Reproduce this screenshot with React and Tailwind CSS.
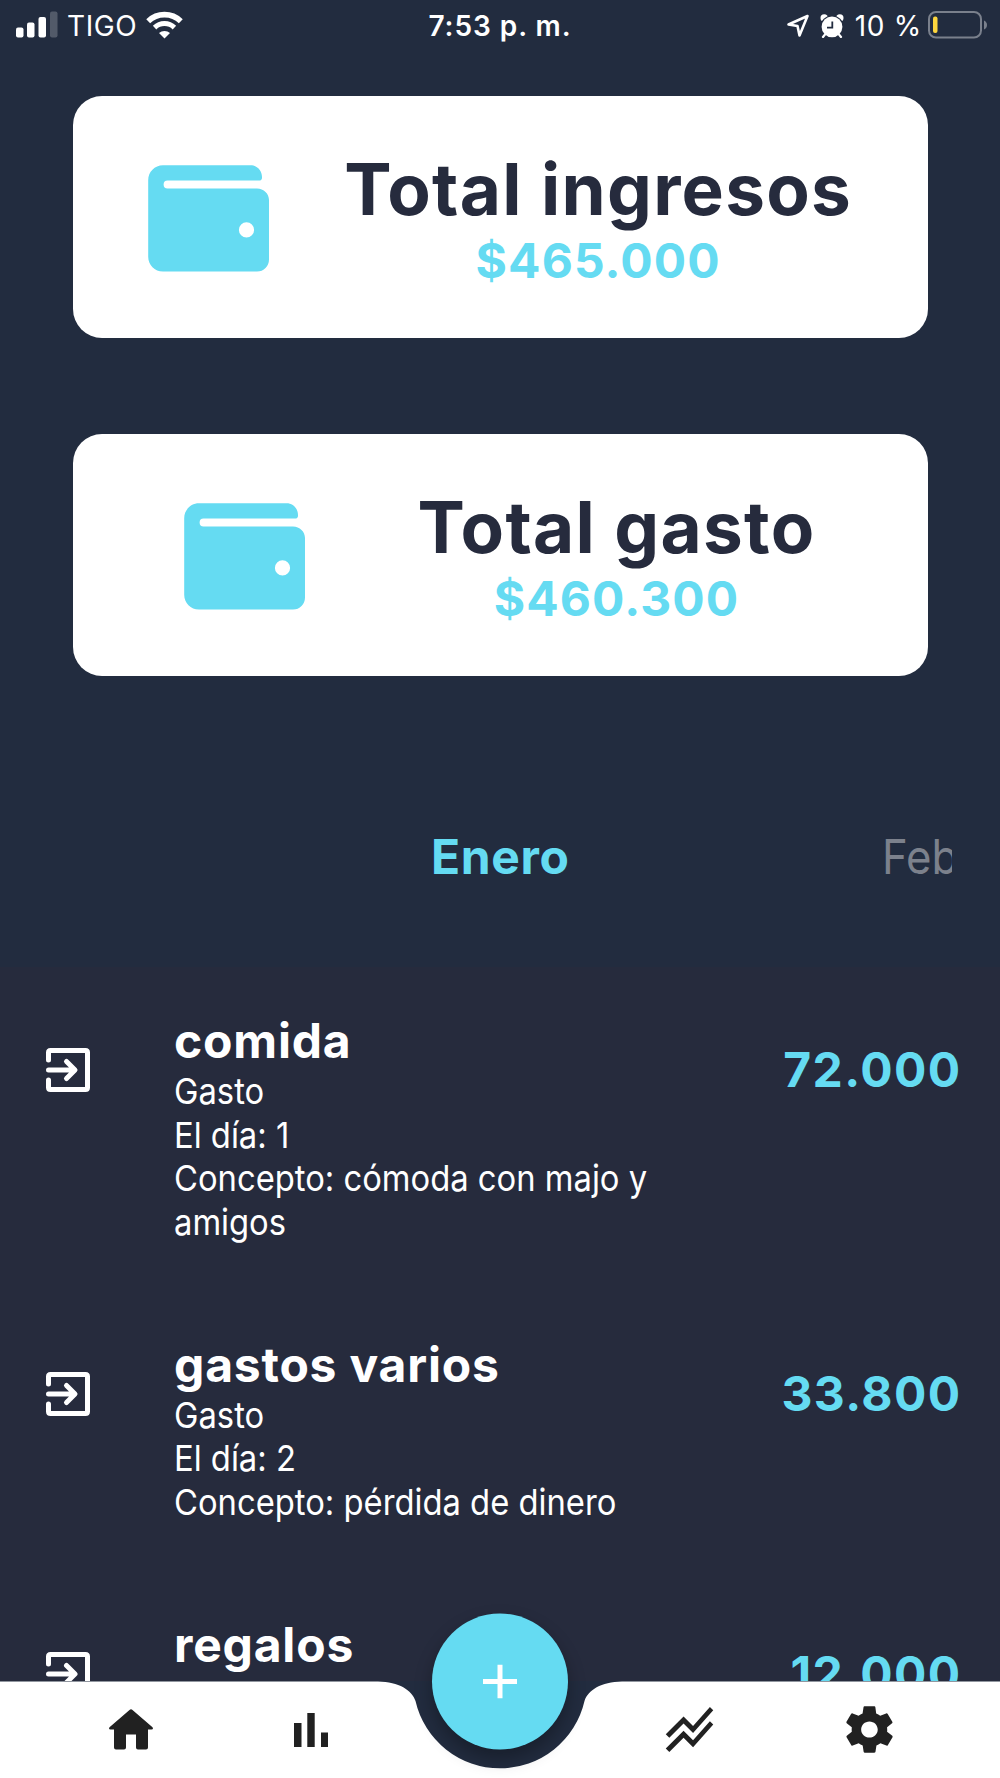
import React from 'react';
import { MdStackedLineChart } from 'react-icons/md';
import { IoMdSettings } from 'react-icons/io';

const totals = [
  { id: 'ingresos', title: 'Total ingresos', amount: '$465.000' },
  { id: 'gasto', title: 'Total gasto', amount: '$460.300' }
];

const movements = [
  {
    id: 1,
    name: 'comida',
    details: ['Gasto', 'El día: 1', 'Concepto: cómoda con majo y amigos'],
    amount: '72.000'
  },
  {
    id: 2,
    name: 'gastos varios',
    details: ['Gasto', 'El día: 2', 'Concepto: pérdida de dinero'],
    amount: '33.800'
  },
  { id: 3, name: 'regalos', details: [], amount: '12.000' }
];

function StatusBar() {
  return (
    <div className="grid h-[51px] grid-cols-[1fr_auto_1fr] items-center pt-px text-[28px] leading-[51px]">
      <div className="flex items-center pl-4">
        {/* señal */}
        <svg width="42" height="27" viewBox="0 0 42 27" fill="#fff" className="mt-[-4px]">
          <rect x="0" y="16.5" width="7.5" height="10" rx="2" />
          <rect x="11" y="11.5" width="7.5" height="15" rx="2" />
          <rect x="22.5" y="6" width="7.5" height="20.5" rx="2" />
          <rect x="34" y="0.5" width="7.5" height="26" rx="2" opacity="0.22" />
        </svg>
        <span className="ml-[9px] font-[370] tracking-[0.6px]">TIGO</span>
        {/* wifi */}
        <svg width="37" height="28" viewBox="0 0 37 28" fill="none" stroke="#fff" className="ml-[9px] mt-[-4px]">
          <path d="M2.2 10.2A23.5 23.5 0 0 1 34.8 10.2" strokeWidth="5.6" />
          <path d="M8.6 16.6A14.3 14.3 0 0 1 28.4 16.6" strokeWidth="5" />
          <path d="M18.5 27.5L13 22a8.2 8.2 0 0 1 11 0Z" fill="#fff" stroke="none" />
        </svg>
      </div>
      <div className="font-[580] tracking-[0.95px]">7:53 p. m.</div>
      <div className="flex items-center justify-end pr-[12px]">
        {/* ubicación */}
        <svg width="24" height="24" viewBox="0 0 24 24" fill="none" stroke="#fff" strokeWidth="2.6" strokeLinejoin="round" className="mt-[-2px]">
          <path d="M21.5 2L2.5 10.5L11.5 12L13.5 21.5Z" />
        </svg>
        {/* alarma */}
        <svg width="24" height="24" viewBox="0 0 24 24" className="ml-[10px] mt-[-2px]">
          <circle cx="4.2" cy="4" r="3.7" fill="#fff" />
          <circle cx="19.8" cy="4" r="3.7" fill="#fff" />
          <circle cx="12" cy="13" r="11.6" fill="#222c3f" />
          <circle cx="12" cy="12.8" r="10.4" fill="#fff" />
          <path d="M5 20.5L3 23M19 20.5L21 23" stroke="#fff" strokeWidth="2.2" strokeLinecap="round" />
          <path d="M12.3 7.5V13.6H7" stroke="#222c3f" strokeWidth="1.8" fill="none" />
        </svg>
        <span className="ml-[11px] font-[370] tracking-[0.7px]">10 %</span>
        {/* batería */}
        <svg width="60" height="28" viewBox="0 0 60 28" className="ml-[6px] mt-[-3px]">
          <rect x="1" y="1" width="52" height="25.5" rx="7" fill="none" stroke="#7a808c" strokeWidth="2" />
          <path d="M56 9.5Q59 11 59 14Q59 17 56 18.5Z" fill="#7a808c" />
          <rect x="5" y="5.5" width="4.5" height="16.5" rx="2" fill="#fdd63e" />
        </svg>
      </div>
    </div>
  );
}

function WalletIcon() {
  return (
    <svg width="121" height="107" viewBox="0 0 121 107" fill="#65dbf2" className="mt-[3px] shrink-0">
      <path
        fillRule="evenodd"
        d="M15 0.3H102.5C109 0.3 114 5.5 114 12V13C114 14.6 112.6 15.6 111 15.6H19.5A3.9 3.9 0 0 0 19.5 23.4H109C115.8 23.4 121 28.6 121 35V94.5C121 101.3 115.8 106.6 109 106.6H15C6.7 106.6 0.2 99.9 0.2 91.7V15.2C0.2 7 6.7 0.3 15 0.3ZM98.5 57.3A7.6 7.6 0 1 0 98.5 72.5A7.6 7.6 0 1 0 98.5 57.3Z"
      />
    </svg>
  );
}

function TotalCard({ title, amount }) {
  return (
    <div className="flex h-[242px] items-center justify-evenly rounded-[29px] bg-white">
      <WalletIcon />
      <div className="pt-0.5 text-center">
        <h2 className="text-[71px] font-bold leading-[84px] tracking-[1.3px] text-[#262b3d]">{title}</h2>
        <p className="text-[48px] font-bold leading-[59px] tracking-[1.1px] text-[#65dbf2]">{amount}</p>
      </div>
    </div>
  );
}

function ExitIcon() {
  return (
    <svg width="44" height="44" viewBox="0 0 44 44" fill="none" stroke="#fff" strokeWidth="5" strokeLinecap="round" strokeLinejoin="round">
      <path d="M2.5 12V4.5Q2.5 2.5 4.5 2.5H39.5Q41.5 2.5 41.5 4.5V39.5Q41.5 41.5 39.5 41.5H4.5Q2.5 41.5 2.5 39.5V32" />
      <path d="M2.5 22H28M20.5 13.5L29 22L20.5 30.5" />
    </svg>
  );
}

function Movement({ item }) {
  return (
    <div className="flex items-start pb-[47.5px] pl-[46px] pr-[38.5px] pt-[45px]">
      <div className="mt-9 w-32 shrink-0">
        <ExitIcon />
      </div>
      <div className="w-[540px] shrink-0">
        <h3 className="text-[48px] font-bold leading-[57px] tracking-[0.8px]">{item.name}</h3>
        <div className="origin-left translate-y-px scale-x-[0.91] text-[36px] font-[430] leading-[43.5px]">
          {item.details.map(line => (
            <p key={line}>{line}</p>
          ))}
        </div>
      </div>
      <div className="mt-[29px] flex-1 text-right text-[48px] font-bold leading-[58px] tracking-[1.4px] text-[#65dbf2]">
        {item.amount}
      </div>
    </div>
  );
}

function HomeIcon() {
  return (
    <svg width="44" height="41" viewBox="0 0 44 41" fill="#212121">
      <path d="M20.5 0.9Q22 -0.3 23.5 0.9L43.5 18.2Q44.8 20.3 42.5 20.5H39V38.5Q39 40.5 37 40.5H29Q27 40.5 27 38.5V25.5H17V38.5Q17 40.5 15 40.5H7Q5 40.5 5 38.5V20.5H1.5Q-0.8 20.3 0.5 18.2Z" />
    </svg>
  );
}

function BarsIcon() {
  return (
    <svg width="34" height="34" viewBox="0 0 34 34" fill="#212121">
      <path d="M0 10H7.5V34H0ZM13.3 0H20.7V34H13.3ZM27 19.5H34V34H27Z" />
    </svg>
  );
}

function BottomNav() {
  return (
    <nav className="absolute inset-x-0 bottom-0 h-[97px] bg-[#222c3f] text-[#212121]">
      <svg width="1000" height="97" viewBox="0 0 1000 97" fill="#fff" className="absolute inset-0">
        <path d="M0 0.5H378C399 1 412 9 415.5 20A86.7 86.7 0 0 0 584.5 20C588 9 601 1 622 0.5H1000V97H0Z" />
      </svg>
      <div className="relative grid grid-cols-[262px_98px_280px_98px_262px] grid-rows-[97px] items-center">
        <div className="flex justify-center">
          <HomeIcon />
        </div>
        <div className="flex justify-center">
          <BarsIcon />
        </div>
        <button
          className="flex size-[136px] -translate-y-[48.5px] items-center justify-center justify-self-center rounded-full bg-[#65dbf2] shadow-[0_9px_18px_rgba(0,0,0,0.3)]"
        >
          <svg width="34" height="34" viewBox="0 0 34 34" stroke="#fff" strokeWidth="5">
            <path d="M17 0V34M0 17H34" />
          </svg>
        </button>
        <div className="flex justify-center">
          <MdStackedLineChart size={57} />
        </div>
        <div className="flex justify-center">
          <IoMdSettings size={57} />
        </div>
      </div>
    </nav>
  );
}

export default function App() {
  return (
    <div className="relative h-[1778px] w-[1000px] overflow-hidden bg-[#262b3d] font-['Inter',sans-serif] text-white">
      <header className="h-[967px] bg-[#222c3f]">
        <StatusBar />

        {/* Totales */}
        <div className="mx-[72.5px] mt-[45.4px] flex flex-col gap-24">
          {totals.map(t => (
            <TotalCard key={t.id} title={t.title} amount={t.amount} />
          ))}
        </div>

        {/* Meses */}
        <div className="mx-12 mt-[152px] flex overflow-hidden pl-[383px] text-[48px] leading-[58px]">
          <span className="w-[451px] shrink-0 font-bold tracking-[0.6px] text-[#65dbf2]">Enero</span>
          <span className="origin-left scale-x-[0.91] text-[#7c818c]">Febrero</span>
        </div>
      </header>

      {/* Movimientos del mes */}
      <main className="h-[714px] overflow-hidden">
        {movements.map(item => (
          <Movement key={item.id} item={item} />
        ))}
      </main>

      <BottomNav />
    </div>
  );
}
